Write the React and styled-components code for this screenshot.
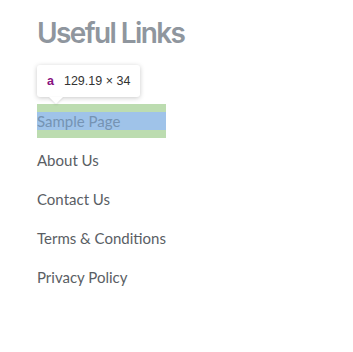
import React from "react";
import styled, { createGlobalStyle } from "styled-components";

const Global = createGlobalStyle`
  html, body { margin: 0; padding: 0; background: #ffffff; }
  body { font-family: Inter, "Noto Sans", sans-serif; }
`;

const Widget = styled.section`
  padding: 15px 37px 0;
  position: relative;
`;

const Heading = styled.h2`
  margin: 0 0 53px;
  font-family: Inter, sans-serif;
  font-weight: 600;
  font-size: 28px;
  line-height: 36px;
  letter-spacing: -1.6px;
  color: #8f969e;
`;

const List = styled.ul`
  list-style: none;
  margin: 0;
  padding: 0;
  display: inline-flex;
  flex-direction: column;
  gap: 5px;
  position: relative;
`;

const Item = styled.li`
  margin: 0;
`;

const Link = styled.a`
  display: block;
  padding: 8px 0;
  font-family: Lato, sans-serif;
  font-size: 15px;
  line-height: 18px;
  color: ${(p) => (p.$inspected ? "#7593b3" : "#5a5e64")};
  text-decoration: none;
  background: ${(p) => (p.$inspected ? "#bcdcb0" : "transparent")};
  white-space: nowrap;
`;

const Content = styled.span`
  display: block;
  background: ${(p) => (p.$inspected ? "#9fc3e9" : "transparent")};
`;

const Tooltip = styled.div`
  position: absolute;
  left: 0;
  bottom: calc(100% + 7px);
  display: flex;
  align-items: center;
  gap: 10px;
  padding: 0 10px;
  height: 32px;
  background: #ffffff;
  border-radius: 3px;
  box-shadow: 0 1px 5px rgba(0, 0, 0, 0.22);
  font-family: "Liberation Sans", Arial, sans-serif;
  font-size: 12.5px;
  color: #333;
  white-space: nowrap;
  &::after {
    content: "";
    position: absolute;
    left: 12px;
    bottom: -7px;
    border-left: 7px solid transparent;
    border-right: 7px solid transparent;
    border-top: 7px solid #ffffff;
    filter: drop-shadow(0 1px 1px rgba(0,0,0,0.12));
  }
`;

const Tag = styled.span`
  color: #881280;
  font-weight: 700;
`;

const links = ["Sample Page", "About Us", "Contact Us", "Terms & Conditions", "Privacy Policy"];

export default function App() {
  return (
    <>
      <Global />
      <Widget>
        <Heading>Useful Links</Heading>
        <List>
          <Tooltip>
            <Tag>a</Tag>
            <span>129.19 × 34</span>
          </Tooltip>
          {links.map((l, i) => (
            <Item key={l}>
              <Link href="#" $inspected={i === 0}>
                <Content $inspected={i === 0}>{l}</Content>
              </Link>
            </Item>
          ))}
        </List>
      </Widget>
    </>
  );
}
